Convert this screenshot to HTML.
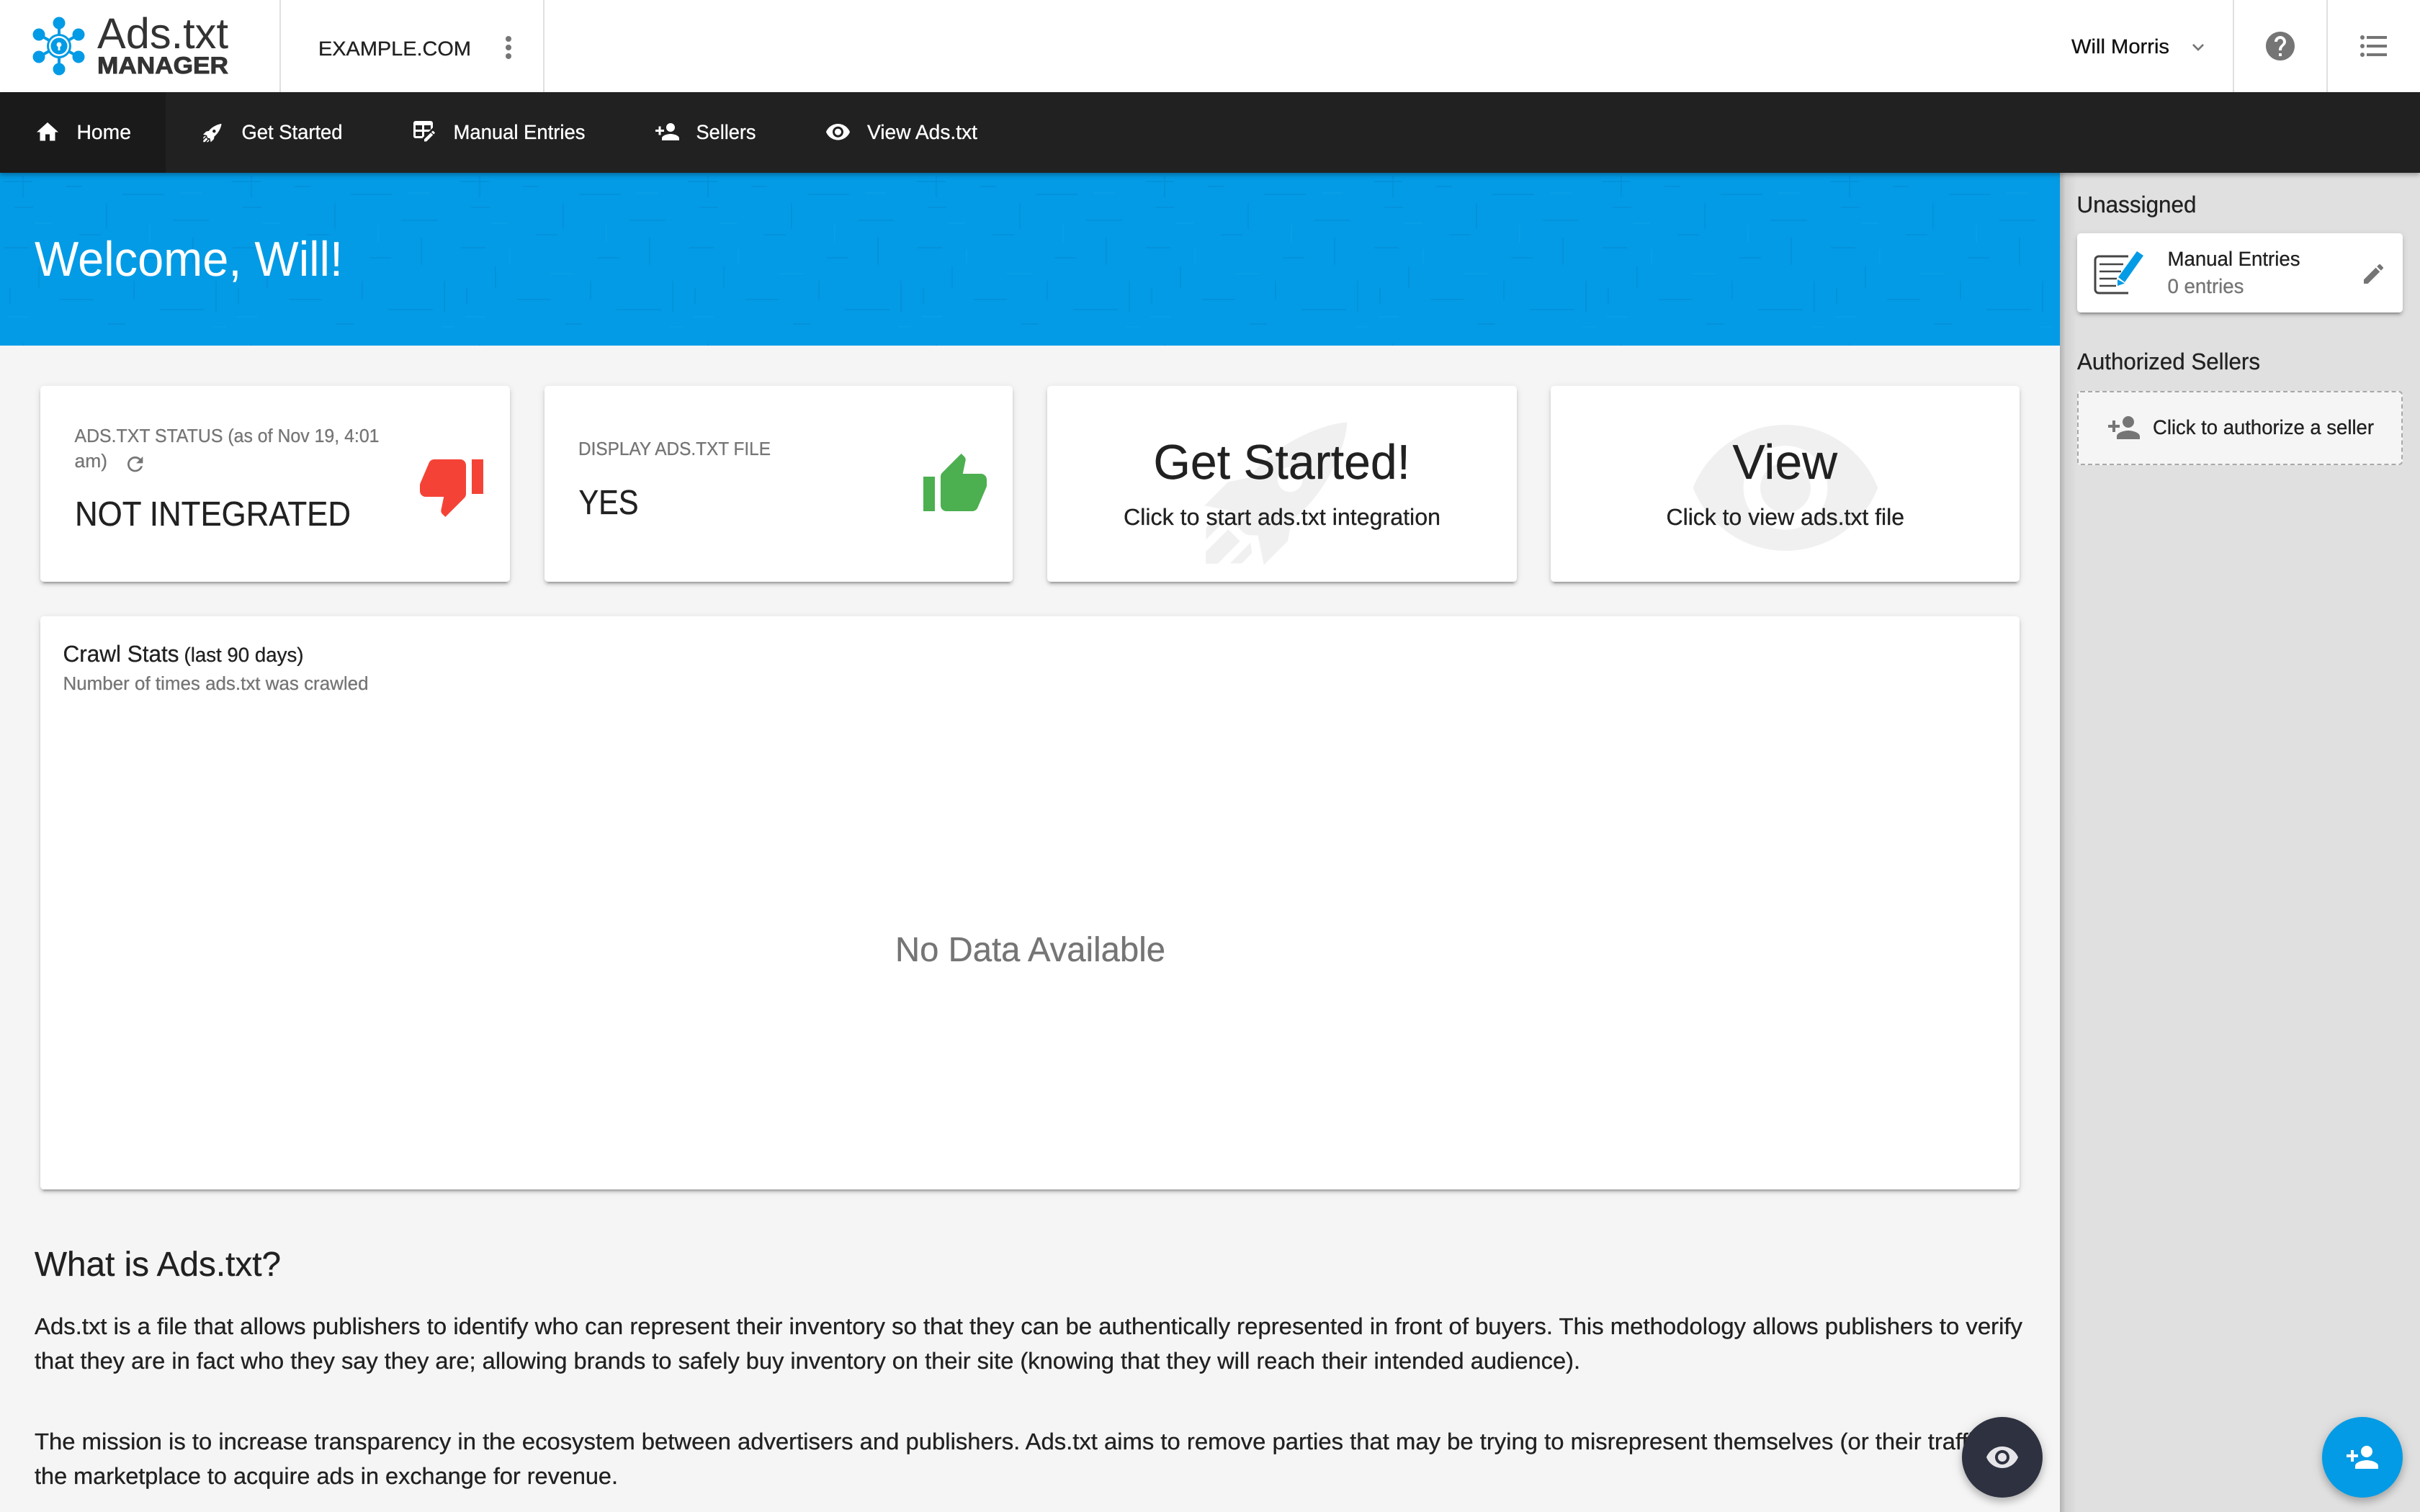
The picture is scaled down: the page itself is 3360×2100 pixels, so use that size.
<!DOCTYPE html>
<html lang="en"><head><meta charset="utf-8"><title>Ads.txt Manager</title>
<style>
html,body{margin:0;padding:0;width:3360px;height:2100px;overflow:hidden;background:#f5f5f5}
div{position:absolute;box-sizing:border-box}
.card{background:#fff;border-radius:5px;box-shadow:0 4px 4px rgba(0,0,0,.14),0 6px 2px -4px rgba(0,0,0,.2),0 2px 10px rgba(0,0,0,.1)}
.vd{top:0;width:2px;height:128px;background:#e0e0e0}
.fab{border-radius:50%;width:112px;height:112px;top:1968px;box-shadow:0 6px 10px rgba(0,0,0,.2),0 2px 18px rgba(0,0,0,.12)}
svg{position:absolute;left:0;top:0}
text{font-family:"Liberation Sans",Arial,sans-serif;text-rendering:geometricPrecision;fill:#212121;stroke:#212121;stroke-width:.3}
.g{fill:#757575;stroke:#757575}.w{fill:#fff;stroke:#fff}
</style></head><body>
<div style="left:0;top:0;width:3360px;height:128px;background:#fff"></div>
<div class="vd" style="left:388px"></div><div class="vd" style="left:754px"></div>
<div class="vd" style="left:3100px"></div><div class="vd" style="left:3230px"></div>
<svg width="2860" height="240" style="top:240px">
<defs><pattern id="tx" width="317" height="233" patternUnits="userSpaceOnUse">
<rect width="317" height="233" fill="#039be5"/>
<g stroke="#0277bd" stroke-width="1.5" opacity=".3" fill="none"><path d="M5 12h40M92 19h22M170 30h58M20 48h26M240 66h50M6 104h34M196 118h30M32 4v30M148 42v36M268 90v38M54 130v30M14 160v22M84 176h46M222 190h62M150 210h24M300 150v44M110 86h30M186 150v26"/></g>
<g stroke="#29b6f6" stroke-width="1.5" opacity=".2" fill="none"><path d="M48 70h24M250 28h30M12 200h28M74 106v20M208 72v24M130 140h34M296 214h18"/></g>
</pattern></defs>
<rect width="2860" height="240" fill="url(#tx)"/></svg>
<div style="left:2860px;top:240px;width:500px;height:1860px;background:#e0e0e0"></div>
<div style="left:2860px;top:240px;width:24px;height:1860px;background:linear-gradient(90deg,rgba(0,0,0,.2),rgba(0,0,0,.06) 35%,rgba(0,0,0,0))"></div>
<div style="left:0;top:128px;width:3360px;height:112px;background:#212121;box-shadow:0 3px 6px rgba(0,0,0,.3)"></div>
<div style="left:0;top:128px;width:230px;height:112px;background:#1a1a1a"></div>
<div class="card" style="left:56px;top:536px;width:652px;height:272px"></div>
<div class="card" style="left:756px;top:536px;width:650px;height:272px"></div>
<div class="card" style="left:1454px;top:536px;width:652px;height:272px"></div>
<div class="card" style="left:2153px;top:536px;width:651px;height:272px"></div>
<div class="card" style="left:56px;top:856px;width:2748px;height:796px"></div>
<div class="card" style="left:2884px;top:324px;width:452px;height:110px"></div>
<div style="left:2884px;top:543px;width:452px;height:103px;background:#f5f5f5;border:2px dashed #a8a8a8;border-radius:5px"></div>

<svg width="3360" height="2100" viewBox="0 0 3360 2100">
<!-- logo -->
<g fill="#039be5" stroke="none">
<g stroke="#039be5" stroke-width="4"><path d="M82 32V96M54 48L109 79M109 48L54 79"/></g>
<circle cx="82" cy="32" r="8.5"/><circle cx="82" cy="96" r="8.5"/>
<circle cx="54" cy="48" r="8.5"/><circle cx="109" cy="48" r="8.5"/>
<circle cx="54" cy="79" r="8.5"/><circle cx="109" cy="79" r="8.5"/>
<circle cx="82" cy="64" r="17"/><circle cx="82" cy="64" r="14" fill="#fff"/><circle cx="82" cy="64" r="11.5"/>
<circle cx="82" cy="62" r="3.4" fill="#fff"/><rect x="80.6" y="62" width="2.8" height="8" fill="#fff"/>
</g>
<text x="135" y="67" font-size="60" textLength="182" lengthAdjust="spacingAndGlyphs" style="fill:#333;stroke:none">Ads.txt</text>
<text x="135" y="102" font-size="33" font-weight="700" textLength="182" lengthAdjust="spacingAndGlyphs" style="fill:#333;stroke:#333;stroke-width:.9">MANAGER</text>
<text x="442" y="77" font-size="28" textLength="212" lengthAdjust="spacingAndGlyphs">EXAMPLE.COM</text>
<g fill="#757575"><circle cx="706" cy="54" r="4"/><circle cx="706" cy="66" r="4"/><circle cx="706" cy="78" r="4"/></g>

<!-- right header -->
<text x="2876" y="74" font-size="28" textLength="136" lengthAdjust="spacingAndGlyphs" style="fill:#111;stroke:#111">Will Morris</text>
<path transform="translate(3036 49.6) scale(1.333)" fill="#757575" d="M16.59 8.59L12 13.17 7.41 8.59 6 10l6 6 6-6z"/>
<path transform="translate(3142 40) scale(2)" fill="#757575" d="M12 2C6.48 2 2 6.48 2 12s4.48 10 10 10 10-4.48 10-10S17.52 2 12 2zm1 17h-2v-2h2v2zm2.07-7.75l-.9.92C13.45 12.9 13 13.5 13 15h-2v-.5c0-1.1.45-2.1 1.17-2.83l1.24-1.26c.37-.36.59-.86.59-1.41 0-1.1-.9-2-2-2s-2 .9-2 2H8c0-2.21 1.79-4 4-4s4 1.79 4 4c0 .88-.36 1.68-.93 2.25z"/>
<g fill="#757575"><circle cx="3280" cy="52" r="3"/><circle cx="3280" cy="64" r="3"/><circle cx="3280" cy="76" r="3"/>
<rect x="3286" y="50" width="28" height="4"/><rect x="3286" y="62" width="28" height="4"/><rect x="3286" y="74" width="28" height="4"/></g>

<!-- nav -->
<g fill="#fff">
<path transform="translate(48 165.5) scale(1.5)" d="M10 20v-6h4v6h5v-8h3L12 3 2 12h3v8z"/>
<path transform="translate(277.8 165.7) scale(1.5)" d="M2.81,14.12L5.64,11.29L8.17,10.79C11.39,6.41 17.55,4.22 19.78,4.22C19.78,6.45 17.59,12.61 13.21,15.83L12.71,18.36L9.88,21.19L9.17,17.66C7.76,17.66 7.76,17.66 7.05,16.95C6.34,16.24 6.34,16.24 6.34,14.83L2.81,14.12M5.64,16.95L7.05,18.36L4.39,21.03H2.97V19.61L5.64,16.95M4.22,15.54L5.46,15.71L3,18.16V16.74L4.22,15.54M8.29,18.54L8.46,19.78L7.26,21H5.84L8.29,18.54M13,9.5A1.5,1.5 0 0,0 11.5,11A1.5,1.5 0 0,0 13,12.5A1.5,1.5 0 0,0 14.5,11A1.5,1.5 0 0,0 13,9.5Z" fill-rule="evenodd"/>
<path transform="translate(571 165) scale(1.5)" fill-rule="evenodd" d="M21.7,13.35L20.7,14.35L18.65,12.3L19.65,11.3C19.86,11.08 20.21,11.08 20.42,11.3L21.7,12.58C21.92,12.79 21.92,13.14 21.7,13.35M12,18.94L18.07,12.88L20.12,14.93L14.06,21H12V18.94M4,2H18A2,2 0 0,1 20,4V8.17L16.17,12H12V16.17L10.17,18H4A2,2 0 0,1 2,16V4A2,2 0 0,1 4,2M4,6V10H10V6H4M12,6V10H18V6H12M4,12V16H10V12H4Z"/>
<path transform="translate(908.5 165) scale(1.5)" d="M15 12c2.21 0 4-1.79 4-4s-1.79-4-4-4-4 1.79-4 4 1.79 4 4 4zm-9-2V7H4v3H1v2h3v3h2v-3h3v-2H6zm9 4c-2.67 0-8 1.34-8 4v2h16v-2c0-2.66-5.33-4-8-4z"/>
<path transform="translate(1145.5 165.25) scale(1.5)" d="M12 4.5C7 4.5 2.73 7.61 1 12c1.73 4.39 6 7.5 11 7.5s9.27-3.11 11-7.5c-1.73-4.39-6-7.5-11-7.5zM12 17c-2.76 0-5-2.24-5-5s2.24-5 5-5 5 2.24 5 5-2.24 5-5 5zm0-8c-1.66 0-3 1.34-3 3s1.34 3 3 3 3-1.34 3-3-1.34-3-3-3z"/>
</g>
<text class="w" x="106.5" y="193" font-size="28" textLength="75.5" lengthAdjust="spacingAndGlyphs">Home</text>
<text class="w" x="335.5" y="193" font-size="28" textLength="140" lengthAdjust="spacingAndGlyphs">Get Started</text>
<text class="w" x="629.5" y="193" font-size="28" textLength="183" lengthAdjust="spacingAndGlyphs">Manual Entries</text>
<text class="w" x="966.5" y="193" font-size="28" textLength="83" lengthAdjust="spacingAndGlyphs">Sellers</text>
<text class="w" x="1204" y="193" font-size="28" textLength="153" lengthAdjust="spacingAndGlyphs">View Ads.txt</text>

<!-- hero -->
<text class="w" x="48" y="383" font-size="68" textLength="428" lengthAdjust="spacingAndGlyphs" style="stroke:none">Welcome, Will!</text>

<!-- card 1 -->
<text class="g" x="103.5" y="614" font-size="26" textLength="423" lengthAdjust="spacingAndGlyphs">ADS.TXT STATUS (as of Nov 19, 4:01</text>
<text class="g" x="103.5" y="649" font-size="26" textLength="45.5" lengthAdjust="spacingAndGlyphs">am)</text>
<path transform="translate(171.7 628.7) scale(1.333)" fill="#757575" d="M17.65 6.35C16.2 4.9 14.21 4 12 4c-4.42 0-7.99 3.58-7.99 8s3.57 8 7.99 8c3.73 0 6.84-2.55 7.73-6h-2.08c-.82 2.33-3.04 4-5.65 4-3.31 0-6-2.69-6-6s2.69-6 6-6c1.66 0 3.14.69 4.22 1.78L13 11h7V4l-2.35 2.35z"/>
<text x="104" y="730" font-size="48" textLength="383" lengthAdjust="spacingAndGlyphs">NOT INTEGRATED</text>
<path transform="translate(579 626) scale(4)" fill="#f44336" d="M15 3H6c-.83 0-1.54.5-1.84 1.22l-3.02 7.05c-.09.23-.14.47-.14.73v2c0 1.1.9 2 2 2h6.31l-.95 4.57-.03.32c0 .41.17.79.44 1.06L9.83 23l6.59-6.59c.36-.36.58-.86.58-1.41V5c0-1.1-.9-2-2-2zm4 0v12h4V3h-4z"/>

<!-- card 2 -->
<text class="g" x="803" y="632" font-size="26" textLength="267" lengthAdjust="spacingAndGlyphs">DISPLAY ADS.TXT FILE</text>
<text x="803.5" y="714" font-size="48" textLength="83" lengthAdjust="spacingAndGlyphs">YES</text>
<path transform="translate(1278 626) scale(4)" fill="#4caf50" d="M1 21h4V9H1v12zm22-11c0-1.1-.9-2-2-2h-6.31l.95-4.57.03-.32c0-.41-.17-.79-.44-1.06L14.17 1 7.59 7.59C7.22 7.95 7 8.45 7 9v10c0 1.1.9 2 2 2h9c.83 0 1.54-.5 1.84-1.22l3.02-7.05c.09-.23.14-.47.14-.73v-2z"/>

<!-- card 3 -->
<path transform="translate(1639.5 537.5) scale(11.667)" fill="#f0f0f0" fill-rule="evenodd" d="M2.81,14.12L5.64,11.29L8.17,10.79C11.39,6.41 17.55,4.22 19.78,4.22C19.78,6.45 17.59,12.61 13.21,15.83L12.71,18.36L9.88,21.19L9.17,17.66C7.76,17.66 7.76,17.66 7.05,16.95C6.34,16.24 6.34,16.24 6.34,14.83L2.81,14.12M5.64,16.95L7.05,18.36L4.39,21.03H2.97V19.61L5.64,16.95M4.22,15.54L5.46,15.71L3,18.16V16.74L4.22,15.54M8.29,18.54L8.46,19.78L7.26,21H5.84L8.29,18.54M13,9.5A1.5,1.5 0 0,0 11.5,11A1.5,1.5 0 0,0 13,12.5A1.5,1.5 0 0,0 14.5,11A1.5,1.5 0 0,0 13,9.5Z"/>
<text x="1601.5" y="665" font-size="68" textLength="356.5" lengthAdjust="spacingAndGlyphs">Get Started!</text>
<text x="1560" y="729" font-size="32" textLength="440" lengthAdjust="spacingAndGlyphs">Click to start ads.txt integration</text>

<!-- card 4 -->
<path transform="translate(2339 537.5) scale(11.667)" fill="#f0f0f0" d="M12 4.5C7 4.5 2.73 7.61 1 12c1.73 4.39 6 7.5 11 7.5s9.27-3.11 11-7.5c-1.73-4.39-6-7.5-11-7.5zM12 17c-2.76 0-5-2.24-5-5s2.24-5 5-5 5 2.24 5 5-2.24 5-5 5zm0-8c-1.66 0-3 1.34-3 3s1.34 3 3 3 3-1.34 3-3-1.34-3-3-3z"/>
<text x="2405.5" y="665" font-size="68" textLength="145.5" lengthAdjust="spacingAndGlyphs">View</text>
<text x="2313.5" y="729" font-size="32" textLength="330.5" lengthAdjust="spacingAndGlyphs">Click to view ads.txt file</text>

<!-- crawl -->
<text x="87.5" y="919" font-size="32" textLength="161" lengthAdjust="spacingAndGlyphs">Crawl Stats</text>
<text x="255.5" y="919" font-size="28" textLength="166" lengthAdjust="spacingAndGlyphs">(last 90 days)</text>
<text class="g" x="87.5" y="958" font-size="26" textLength="424" lengthAdjust="spacingAndGlyphs">Number of times ads.txt was crawled</text>
<text class="g" x="1243" y="1335" font-size="48" textLength="375" lengthAdjust="spacingAndGlyphs">No Data Available</text>

<!-- about -->
<text x="48" y="1772" font-size="48" textLength="342" lengthAdjust="spacingAndGlyphs">What is Ads.txt?</text>
<text x="48" y="1853" font-size="32" textLength="2760" lengthAdjust="spacingAndGlyphs">Ads.txt is a file that allows publishers to identify who can represent their inventory so that they can be authentically represented in front of buyers. This methodology allows publishers to verify</text>
<text x="48" y="1901" font-size="32" textLength="2146" lengthAdjust="spacingAndGlyphs">that they are in fact who they say they are; allowing brands to safely buy inventory on their site (knowing that they will reach their intended audience).</text>
<text x="48" y="2013" font-size="32" textLength="2754" lengthAdjust="spacingAndGlyphs">The mission is to increase transparency in the ecosystem between advertisers and publishers. Ads.txt aims to remove parties that may be trying to misrepresent themselves (or their traffic) in</text>
<text x="48" y="2061" font-size="32" textLength="810" lengthAdjust="spacingAndGlyphs">the marketplace to acquire ads in exchange for revenue.</text>

<!-- sidebar -->
<text x="2883.5" y="295" font-size="32" textLength="166" lengthAdjust="spacingAndGlyphs">Unassigned</text>
<g fill="none" stroke="#444" stroke-width="3">
<path d="M2955 356H2914a5 5 0 0 0-5 5V402a5 5 0 0 0 5 5H2955"/>
<path stroke-width="2.6" d="M2915 367H2948M2915 377H2945M2915 387H2939M2915 397H2938"/>
</g>
<path fill="#039be5" d="M2967 349L2976 355L2950 392L2941 385Z"/>
<path fill="#039be5" d="M2940 388L2950 393.5L2940 397Z"/>
<text x="3009.5" y="369" font-size="28" textLength="184" lengthAdjust="spacingAndGlyphs">Manual Entries</text>
<text class="g" x="3009.5" y="407" font-size="28" textLength="106" lengthAdjust="spacingAndGlyphs">0 entries</text>
<path transform="translate(3277.5 362.5) scale(1.5)" fill="#757575" d="M3 17.25V21h3.75L17.81 9.94l-3.75-3.75L3 17.25zM20.71 7.04c.39-.39.39-1.02 0-1.41l-2.34-2.34c-.39-.39-1.02-.39-1.41 0l-1.83 1.83 3.75 3.75 1.83-1.83z"/>
<text x="2884" y="513" font-size="32" textLength="254" lengthAdjust="spacingAndGlyphs">Authorized Sellers</text>
<path transform="translate(2925 570) scale(2)" fill="#757575" d="M15 12c2.21 0 4-1.79 4-4s-1.79-4-4-4-4 1.79-4 4 1.79 4 4 4zm-9-2V7H4v3H1v2h3v3h2v-3h3v-2H6zm9 4c-2.67 0-8 1.34-8 4v2h16v-2c0-2.66-5.33-4-8-4z"/>
<text x="2989" y="603" font-size="28" textLength="307" lengthAdjust="spacingAndGlyphs">Click to authorize a seller</text>
</svg>

<div class="fab" style="left:2724px;background:#2e3140"></div>
<div class="fab" style="left:3224px;background:#039be5"></div>
<svg width="3360" height="2100" viewBox="0 0 3360 2100">
<path transform="translate(2756 2000) scale(2)" fill="#e6e6ea" d="M12 4.5C7 4.5 2.73 7.61 1 12c1.73 4.39 6 7.5 11 7.5s9.27-3.11 11-7.5c-1.73-4.39-6-7.5-11-7.5zM12 17c-2.76 0-5-2.24-5-5s2.24-5 5-5 5 2.24 5 5-2.24 5-5 5zm0-8c-1.66 0-3 1.34-3 3s1.34 3 3 3 3-1.34 3-3-1.34-3-3-3z"/>
<path transform="translate(3256 2000) scale(2)" fill="#fff" d="M15 12c2.21 0 4-1.79 4-4s-1.79-4-4-4-4 1.79-4 4 1.79 4 4 4zm-9-2V7H4v3H1v2h3v3h2v-3h3v-2H6zm9 4c-2.67 0-8 1.34-8 4v2h16v-2c0-2.66-5.33-4-8-4z"/>
</svg>
</body></html>
